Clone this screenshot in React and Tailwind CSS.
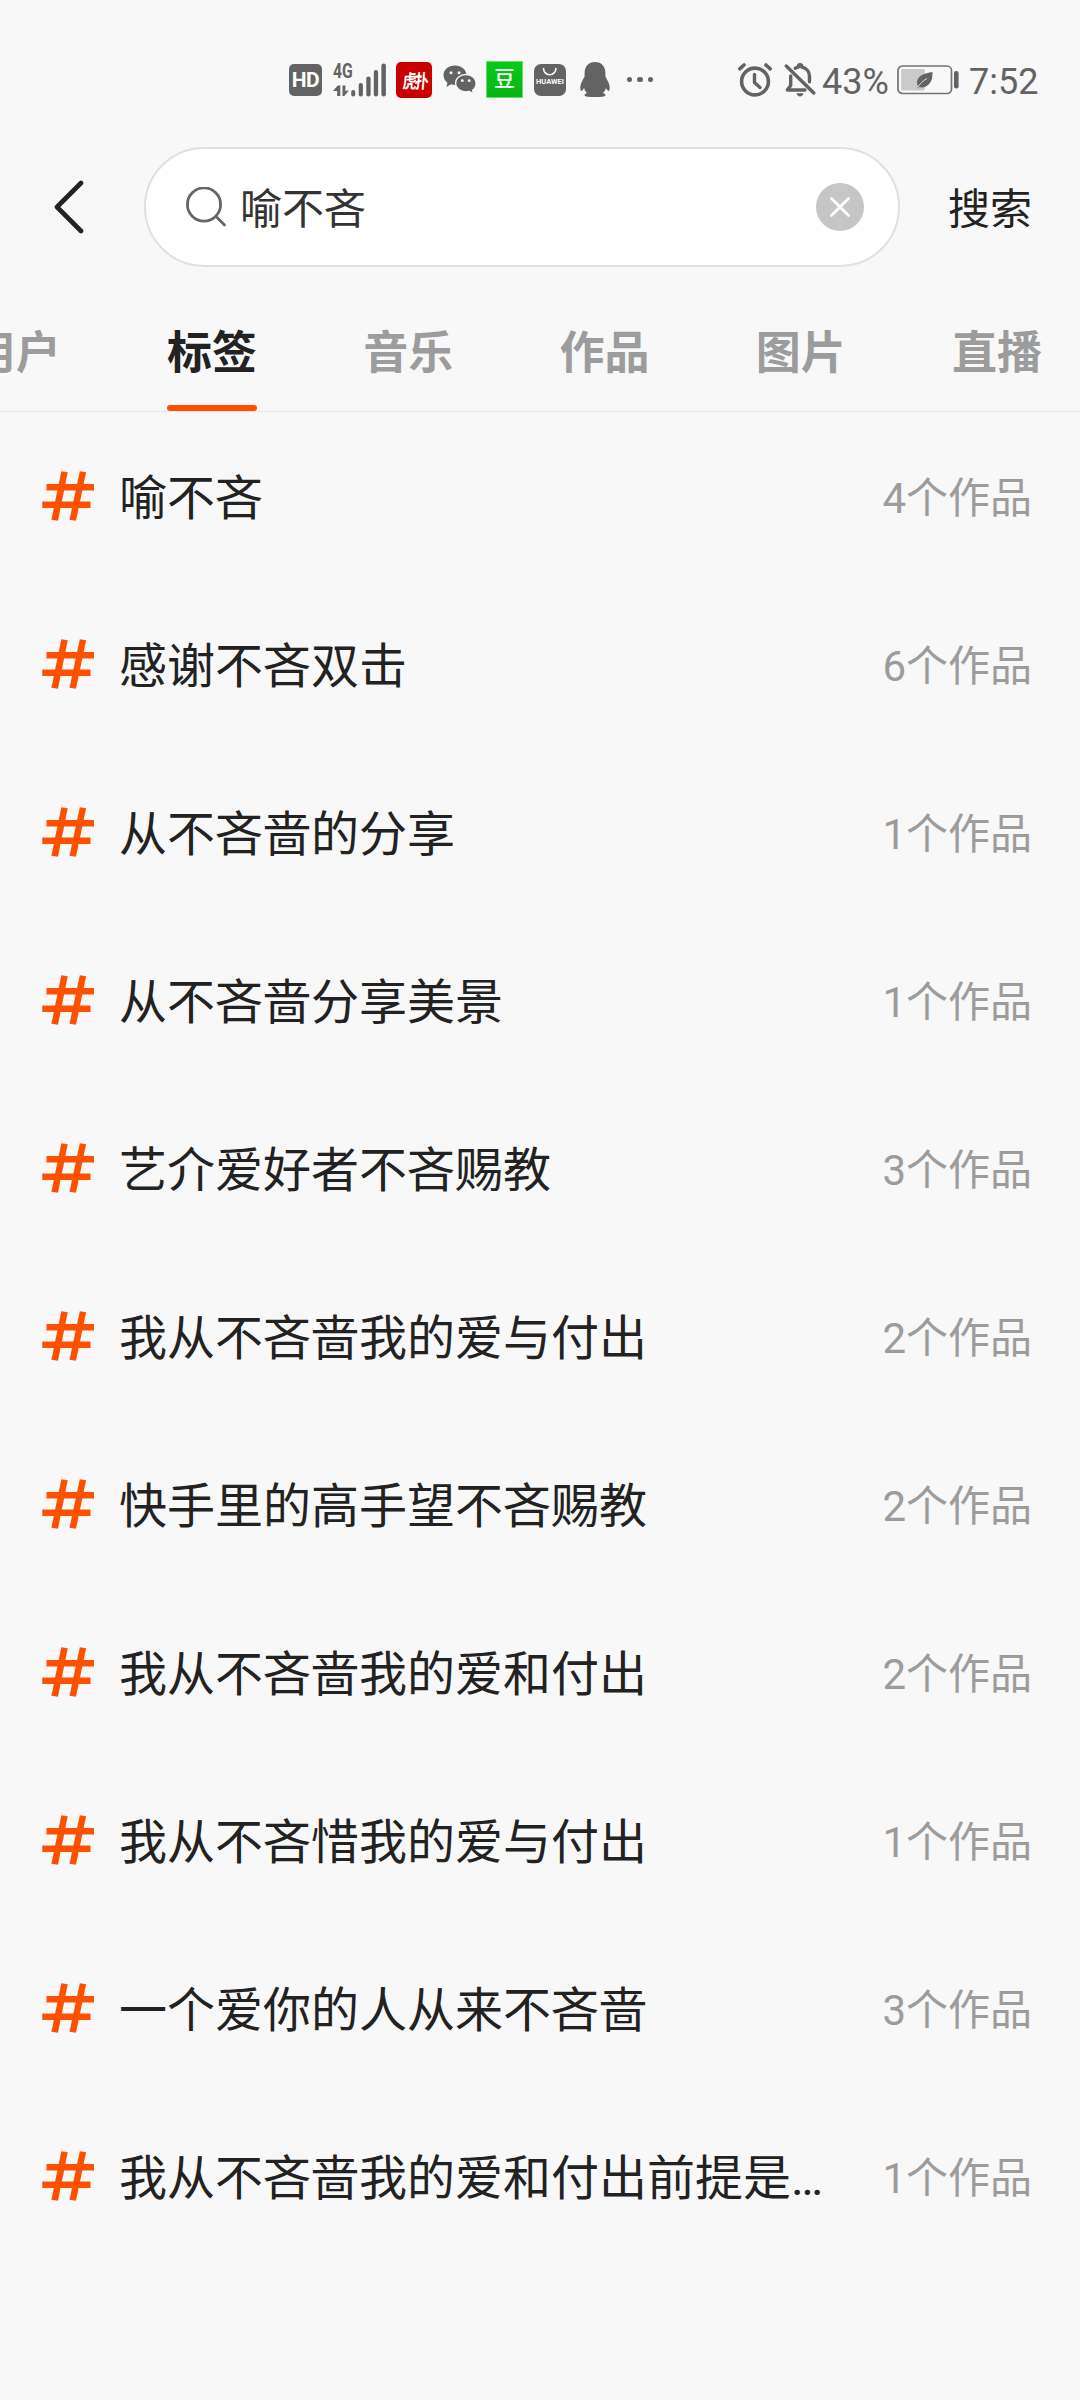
import React from "react";

const TABS = ["用户", "标签", "音乐", "作品", "图片", "直播"];
const ACTIVE_TAB = "标签";

const TAGS = [
  { name: "喻不吝", count: 4 },
  { name: "感谢不吝双击", count: 6 },
  { name: "从不吝啬的分享", count: 1 },
  { name: "从不吝啬分享美景", count: 1 },
  { name: "艺介爱好者不吝赐教", count: 3 },
  { name: "我从不吝啬我的爱与付出", count: 2 },
  { name: "快手里的高手望不吝赐教", count: 2 },
  { name: "我从不吝啬我的爱和付出", count: 2 },
  { name: "我从不吝惜我的爱与付出", count: 1 },
  { name: "一个爱你的人从来不吝啬", count: 3 },
  { name: "我从不吝啬我的爱和付出前提是…", count: 1 },
];

const NetworkIcon = () => (
  <div className="relative w-[54px] h-[34px]">
    <span className="absolute left-[-0.5px] top-[-2px] text-[21px] leading-[21px] font-bold origin-left scale-x-[0.75]">
      4G
    </span>
    <svg className="w-[54px] h-[34px]" viewBox="0 0 54 34" fill="#636363">
      <path d="M0 28 4.800 22.500H7.300V33H4.200V28ZM9.500 22.500H12.400V28L16 27.200 11.300 33H9.500Z" />
      <rect x="18.200" y="27" width="4" height="6.500" rx="1.900" />
      <rect x="25.700" y="20" width="4.200" height="13.500" rx="2" />
      <rect x="33.300" y="13.500" width="4.300" height="20" rx="2.100" />
      <rect x="40.800" y="7" width="4.300" height="26.500" rx="2.100" />
      <rect x="48.400" y="0.500" width="4.500" height="33" rx="2.200" />
    </svg>
  </div>
);

const WechatIcon = () => (
  <svg className="w-[34px] h-[30px]" viewBox="0 0 34 30">
    <path
      d="M12 .5C5.500 .5 .5 4.700 .5 10.200c0 3 1.500 5.700 4 7.500L3.300 22l4.800-2.700c1.200.4 2.500.6 3.900.6 6.400 0 11.500-4.300 11.500-9.700S18.400.5 12 .5Z"
      fill="#636363"
    />
    <circle cx="8" cy="7.800" r="1.500" fill="#f8f8f8" />
    <circle cx="16" cy="7.800" r="1.500" fill="#f8f8f8" />
    <path
      d="M22.800 9.500c-5.700 0-10.200 3.900-10.200 8.700s4.500 8.700 10.200 8.700c1.300 0 2.500-.2 3.600-.5l4.100 2.500-.9-3.700c2.200-1.600 3.500-4.100 3.500-7 0-4.800-4.600-8.700-10.300-8.700Z"
      fill="#636363"
      stroke="#f8f8f8"
      strokeWidth="1.300"
    />
    <circle cx="19.300" cy="15.700" r="1.400" fill="#f8f8f8" />
    <circle cx="26.200" cy="15.700" r="1.400" fill="#f8f8f8" />
  </svg>
);

const HuaweiIcon = () => (
  <div className="relative w-8 h-8 rounded-[7px] bg-[#636363]">
    <svg className="absolute left-0 top-0 w-8 h-8" viewBox="0 0 32 32" fill="none">
      <path d="M9.500 4.500a6.200 6.200 0 0 0 12.400 0" stroke="#fff" strokeWidth="1.600" strokeLinecap="round" />
    </svg>
    <span className="absolute left-[1px] top-[14.5px] w-[30px] text-center text-[7.5px] leading-[8px] font-bold text-white">
      HUAWEI
    </span>
  </div>
);

const PenguinIcon = () => (
  <svg className="w-[30px] h-[35px]" viewBox="0 0 30 35" fill="#636363">
    <path d="M15 0C8.500 0 4.600 4.600 4.600 10.800v3.700C3 17.500.3 21.500.3 25.500c0 2 .4 3.400 1 3.400.9 0 2-1.600 2.800-3 .4 2 1.400 3.800 2.900 5.200-1.500.5-2.500 1.300-2.500 2.200 0 1.200 2.700 1.700 5.700 1.700h9.600c3 0 5.700-.5 5.700-1.700 0-.9-1-1.700-2.500-2.200 1.500-1.400 2.500-3.200 2.900-5.200.8 1.400 1.900 3 2.800 3 .6 0 1-1.400 1-3.400 0-4-2.700-8-4.300-11v-3.700C25.400 4.600 21.500 0 15 0Z" />
  </svg>
);

const AlarmIcon = () => (
  <svg
    className="w-[34px] h-[34px]"
    viewBox="0 0 34 34"
    fill="none"
    stroke="#636363"
    strokeLinecap="round"
    strokeLinejoin="round"
  >
    <circle cx="17" cy="18.500" r="13.400" strokeWidth="3.600" />
    <path d="M16.500 11.500v8l5.500 5" strokeWidth="3.400" />
    <path d="M1.800 5.800 6 2M32.200 5.800 28 2" strokeWidth="3.600" />
  </svg>
);

const MuteIcon = () => (
  <svg
    className="w-[32px] h-[34px]"
    viewBox="0 0 32 34"
    fill="none"
    stroke="#636363"
    strokeWidth="3.400"
    strokeLinecap="round"
    strokeLinejoin="round"
  >
    <path d="M2.300 3 29.800 30" />
    <path d="M6.700 13v9.500L3.300 27H21" />
    <path d="M11.300 5.300c1-.6 2-.9 3-1.100C14.300 2.400 15 1.700 16 1.700s1.800.7 1.800 2.500c4.600.9 7.700 4.300 7.700 9v5.500" />
    <path d="M12.500 30.300h7c-.5 2-1.700 3.200-3.500 3.200s-3-1.200-3.500-3.200Z" fill="#636363" stroke="none" />
  </svg>
);

const BatteryIcon = () => (
  <svg className="w-[62px] h-[30px]" viewBox="0 0 62 30">
    <rect x="1" y="1" width="53.500" height="27.500" rx="4.500" fill="none" stroke="#737373" strokeWidth="1.700" />
    <rect x="4.200" y="4" width="23.600" height="21.500" rx="1.500" fill="#c9c9c9" />
    <rect x="57" y="6" width="4.600" height="17.500" rx="2.200" fill="#636363" />
    <path
      d="M35.500 7c-8 1-15.500 4-15.500 10.500 0 1.500.4 2.800 1 3.800L20 23l1 .6 1.200-1.500C30 23.800 36 18 35.500 7Z"
      fill="#636363"
    />
    <path d="M20.500 22.800c2.500-4.500 5.500-7 9.500-9.300" fill="none" stroke="#d8d8d8" strokeWidth="1" />
  </svg>
);

const HashIcon = () => (
  <svg className="w-[52px] h-[50px] shrink-0" viewBox="0 0 52 50" fill="#ff5000">
    <path d="M4.500 13H52v6.500H4.500ZM.3 30.500H48.500V37H.3Z" />
    <path d="M19.300 .3 25.700 1.300 16 49.800 9.400 48.700ZM37.800 .3 44.100 1.300 34 49.800 27.500 48.700Z" />
  </svg>
);

const StatusBar = () => (
  <header className="flex items-center h-[147px] pt-3 pl-[289px] text-[#636363] font-[Roboto]">
    <div className="flex items-center w-[449px]">
      <div className="flex items-center justify-center w-[33px] h-8 rounded-[5px] bg-[#636363] text-white text-[21px] leading-8 font-bold tracking-[-0.5px]">
        HD
      </div>
      <div className="ml-[11px]">
        <NetworkIcon />
      </div>
      <div className="flex items-center justify-center w-9 h-9 ml-[9px] pl-[2px] rounded-[5px] bg-[#c80000]">
        <span className="text-[14px] leading-none font-bold tracking-[-2px] whitespace-nowrap text-white scale-y-[1.35] -skew-x-6 font-['Noto_Sans_CJK_SC']">
          虎扑
        </span>
      </div>
      <div className="ml-[11px]">
        <WechatIcon />
      </div>
      <div className="flex items-center justify-center w-[37px] h-[37px] ml-[9px] pb-[4px] border border-[#6fdc75] bg-linear-to-b from-[#06cc16] to-[#06b414] text-white text-[21px] leading-none font-medium font-['Noto_Sans_CJK_SC']">
        豆
      </div>
      <div className="ml-[11px]">
        <HuaweiIcon />
      </div>
      <div className="ml-[14px]">
        <PenguinIcon />
      </div>
      <div className="flex gap-[5px] ml-[17px]">
        <i className="size-[5.4px] rounded-full bg-[#636363]" />
        <i className="size-[5.4px] rounded-full bg-[#636363]" />
        <i className="size-[5.4px] rounded-full bg-[#636363]" />
      </div>
    </div>
    <AlarmIcon />
    <div className="ml-3">
      <MuteIcon />
    </div>
    <span className="w-[81px] pl-[6px] pt-[4px] text-[36px] leading-none">43%</span>
    <BatteryIcon />
    <span className="ml-[10px] pt-[4px] text-[36px] leading-none">7:52</span>
  </header>
);

const SearchBar = () => (
  <div className="flex items-center h-[120px]">
    <button className="w-[144px] h-full pl-[54px]" aria-label="返回">
      <svg className="w-[30px] h-[54px]" viewBox="0 0 30 54" fill="none">
        <path
          d="M27 3 3 27 27 51"
          stroke="#222"
          strokeWidth="4.600"
          strokeLinecap="round"
          strokeLinejoin="round"
        />
      </svg>
    </button>
    <div className="flex items-center w-[756px] h-full pl-10 pr-[34px] rounded-full border-2 border-[#e0e0e0] bg-white">
      <svg className="w-[41px] h-[41px]" viewBox="0 0 41 41" fill="none" stroke="#666" strokeWidth="2.800">
        <circle cx="18" cy="17.500" r="16.600" />
        <path d="M30 29.500 38.500 38" strokeLinecap="round" />
      </svg>
      <span className="grow ml-[13px] pt-[5px] text-[42px] leading-[60px] text-[#333]">喻不吝</span>
      <svg className="w-12 h-12" viewBox="0 0 48 48">
        <circle cx="24" cy="24" r="24" fill="#c6c6c6" />
        <path d="M15.500 15.500 32.500 32.500M32.500 15.500 15.500 32.500" stroke="#fff" strokeWidth="2.800" strokeLinecap="round" />
      </svg>
    </div>
    <button className="ml-12 pt-[5px] text-[42px] leading-[60px] text-[#222]">搜索</button>
  </div>
);

const TabBar = () => (
  <nav className="flex gap-[106.25px] h-[145px] pr-[38px] justify-end overflow-hidden border-b border-[#e6e6e6]">
    {TABS.map(tab => (
      <div key={tab} className="flex flex-col justify-between shrink-0 w-[90px] pt-[54px]">
        <span
          className={
            tab === ACTIVE_TAB
              ? "text-[45px] leading-[66px] font-bold text-[#222]"
              : "text-[45px] leading-[66px] font-bold text-[#9c9c9c]"
          }
        >
          {tab}
        </span>
        {tab === ACTIVE_TAB && <div className="h-[6px] rounded-full bg-[#ff5000]" />}
      </div>
    ))}
  </nav>
);

const TagRow = ({ name, count }) => (
  <li className="flex items-center h-[168px] pl-[42px] pr-12">
    <HashIcon />
    <span className="grow ml-[25px] pt-[6px] text-[48px] leading-[72px] whitespace-nowrap text-[#222]">{name}</span>
    <span className="pt-[5px] text-[42px] leading-[60px] whitespace-nowrap text-[#9c9c9c]">{count}个作品</span>
  </li>
);

export default function App() {
  return (
    <div className="w-[1080px] h-[2400px] overflow-hidden bg-[#f8f8f8] font-[Roboto,'Noto_Sans_CJK_SC',sans-serif]">
      <StatusBar />
      <SearchBar />
      <TabBar />
      <ul>
        {TAGS.map(tag => (
          <TagRow key={tag.name} name={tag.name} count={tag.count} />
        ))}
      </ul>
    </div>
  );
}
